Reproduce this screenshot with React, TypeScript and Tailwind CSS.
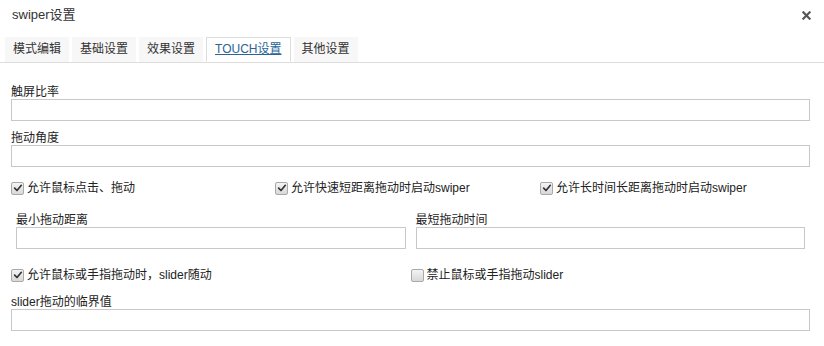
import { ReactNode } from 'react';

const tabs = ['模式编辑', '基础设置', '效果设置', 'TOUCH设置', '其他设置'];
const activeTab = 'TOUCH设置';

function Check({ checked, children }: { checked: boolean; children: ReactNode }) {
  return (
    <label className="flex items-center gap-[3px] h-[22px] text-[12px] text-[#222]">
      <span className="w-[13px] h-[13px] rounded-[2px] border border-[#a9a9a9] bg-gradient-to-b from-[#f4f4f4] to-[#d8d8d8] flex items-center justify-center">
        {checked && (
          <svg viewBox="0 0 12 12" className="w-[10px] h-[10px]">
            <path d="M2 6.2 L4.8 9 L10 2.8" fill="none" stroke="#333" strokeWidth={2} strokeLinecap="round" strokeLinejoin="round" />
          </svg>
        )}
      </span>
      <span>{children}</span>
    </label>
  );
}

function Field({ label, className = '' }: { label: string; className?: string }) {
  return (
    <div className={className}>
      <div className="h-[14px] leading-[14px] text-[12px] text-[#222]">{label}</div>
      <input className="block w-full h-[22px] border border-[#c8c8c8] bg-white outline-none px-1 text-[12px]" />
    </div>
  );
}

export default function App() {
  return (
    <div
      className="w-[824px] h-[346px] bg-white overflow-hidden"
      style={{ fontFamily: '"Liberation Sans", "Noto Sans CJK SC", sans-serif' }}
    >
      {/* Header */}
      <div className="h-[30px] flex items-center justify-between pl-[12px] pr-[13px]">
        <span className="text-[13px] text-[#333]">swiper设置</span>
        <svg viewBox="0 0 10 10" className="w-[9px] h-[9px]">
          <path d="M1.5 1.5 L8.5 8.5 M8.5 1.5 L1.5 8.5" stroke="#555" strokeWidth={2.4} strokeLinecap="square" />
        </svg>
      </div>

      {/* Tabs */}
      <div className="mt-[7px] flex gap-[3px] pl-[5px] border-b border-[#ddd]">
        {tabs.map((t) => (
          <div
            key={t}
            className={
              t === activeTab
                ? 'h-[25px] leading-[23px] px-[8px] text-[12px] bg-white border border-[#ddd] border-b-white -mb-px text-[#2a6496] underline'
                : 'h-[25px] leading-[25px] px-[8px] text-[12px] bg-[#f7f7f7] text-[#333]'
            }
          >
            {t}
          </div>
        ))}
      </div>

      {/* Body */}
      <div className="pl-[11px] pr-[14px] pt-[22px]">
        <Field label="触屏比率" />
        <Field label="拖动角度" className="mt-[10px]" />

        <div className="mt-[10px] grid grid-cols-[264px_265px_1fr]">
          <Check checked>允许鼠标点击、拖动</Check>
          <Check checked>允许快速短距离拖动时启动swiper</Check>
          <Check checked>允许长时间长距离拖动时启动swiper</Check>
        </div>

        <div className="mt-[14px] grid grid-cols-2">
          <Field label="最小拖动距离" className="px-[5px]" />
          <Field label="最短拖动时间" className="px-[5px]" />
        </div>

        <div className="mt-[15px] grid grid-cols-2">
          <Check checked>允许鼠标或手指拖动时，slider随动</Check>
          <Check checked={false}>禁止鼠标或手指拖动slider</Check>
        </div>

        <Field label="slider拖动的临界值" className="mt-[9px]" />
      </div>
    </div>
  );
}
